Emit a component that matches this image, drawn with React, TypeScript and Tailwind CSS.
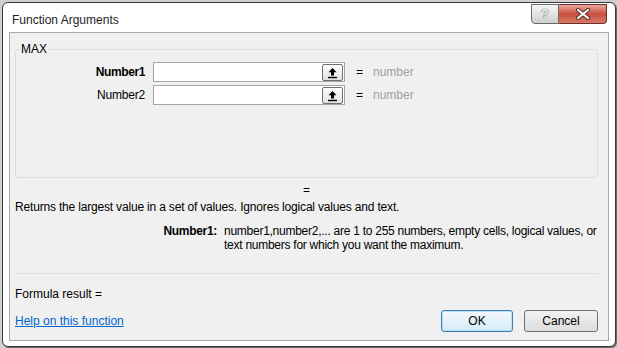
import React from "react";

function UpButton() {
  return (
    <div className="w-[21px] h-[17px] mt-[1px] mr-[1px] border border-[#6f6f6f] rounded-[2px] bg-gradient-to-b from-[#fdfdfd] to-[#e2e2e2] flex items-center justify-center">
      <svg width="11" height="12" viewBox="0 0 11 12">
        <path d="M5.5 1 L9.5 5.2 L7 5.2 L7 8.5 L4 8.5 L4 5.2 L1.5 5.2 Z" fill="#000" />
        <rect x="1" y="9.8" width="9" height="1.4" fill="#000" />
      </svg>
    </div>
  );
}

function ArgRow({ label, bold }: { label: string; bold?: boolean }) {
  return (
    <div className="flex items-center h-[20px]">
      <div className={`w-[129px] text-right ${bold ? "font-bold tracking-[-0.4px]" : "tracking-[-0.2px]"}`}>{label}</div>
      <div className="ml-[8px] w-[192px] h-[20px] border border-[#a5a5a5] bg-white flex justify-end items-start">
        <UpButton />
      </div>
      <div className="ml-[11px]">=</div>
      <div className="ml-[10px] text-[#a0a0a0]">number</div>
    </div>
  );
}

export default function App() {
  return (
    <div className="w-[617px] h-[348px] bg-[#cfcfcf] pt-[2px] pl-[2px] pr-[1px] pb-[1px] font-['Liberation_Sans',Arial,sans-serif] text-[12px] leading-[16px] text-black">
      <div className="h-full flex flex-col bg-white border border-[#3a3a3a] rounded-[6px] shadow-[1px_1px_1px_rgba(0,0,0,0.55)]">
        <div className="h-[29px] shrink-0 flex items-start">
          <div className="pl-[9px] pt-[9px] text-[12px] text-[#1e1e1e]">Function Arguments</div>
          <div className="ml-auto mr-[8px] mt-[1px] flex">
            <div className="w-[28px] h-[20px] border border-[#6a6a6a] rounded-bl-[4px] bg-gradient-to-b from-[#f6f6f6] via-[#e2e2e2] to-[#d0d0d0] flex items-center justify-center">
              <span className="text-[13px] font-bold text-[#f4f4f4] [text-shadow:0_0_1px_#555,0_0_1px_#555]">?</span>
            </div>
            <div className="w-[48px] h-[20px] border border-l-0 border-[#6a3030] rounded-br-[4px] bg-gradient-to-b from-[#e8a797] via-[#c8503e] to-[#d87a66] flex items-center justify-center">
              <svg width="16" height="12" viewBox="0 0 16 12">
                <path d="M3 2 L13 10 M13 2 L3 10" stroke="#4a2a2a" strokeWidth="4" strokeLinecap="round" />
                <path d="M3 2 L13 10 M13 2 L3 10" stroke="#ffffff" strokeWidth="2.2" strokeLinecap="round" />
              </svg>
            </div>
          </div>
        </div>
        <div className="mx-[6px] flex-1 border border-[#a9a9a9] bg-[#f0f0f0] pl-[5px] pr-[10px] flex flex-col">
          <fieldset className="mt-[8px] h-[137px] border border-[#d5dfe5] rounded-[3px] px-0 shrink-0">
            <legend className="ml-[4px] px-[1px] leading-[16px]">MAX</legend>
            <div className="mt-[5px] flex flex-col gap-[3px]">
              <ArgRow label="Number1" bold />
              <ArgRow label="Number2" />
            </div>
          </fieldset>
          <div className="mt-[4px] pl-[288px]">=</div>
          <div className="mt-[1px] tracking-[-0.18px] whitespace-nowrap">Returns the largest value in a set of values. Ignores logical values and text.</div>
          <div className="mt-[9px] flex leading-[14px]">
            <div className="w-[202px] shrink-0 text-right font-bold tracking-[-0.3px]">Number1:</div>
            <div className="ml-[7px] whitespace-nowrap tracking-[-0.26px]">
              number1,number2,... are 1 to 255 numbers, empty cells, logical values, or
              <br />
              text numbers for which you want the maximum.
            </div>
          </div>
          <div className="mt-[21px] h-px bg-[#d5dfe5] shrink-0" />
          <div className="mt-[12px]">Formula result =</div>
          <div className="mt-[8px] flex items-center">
            <a href="#" className="text-[#0066cc] underline">Help on this function</a>
            <div className="ml-auto flex gap-[11px]">
              <button className="w-[72px] h-[22px] rounded-[3px] border border-[#3c7fb1] bg-gradient-to-b from-[#f2f8fc] to-[#d6ecf9] shadow-[inset_0_0_0_1px_#b8e0f8]">OK</button>
              <button className="w-[74px] h-[22px] rounded-[3px] border border-[#707070] bg-gradient-to-b from-[#f2f2f2] to-[#dcdcdc]">Cancel</button>
            </div>
          </div>
        </div>
        <div className="h-[5px] shrink-0" />
      </div>
    </div>
  );
}
